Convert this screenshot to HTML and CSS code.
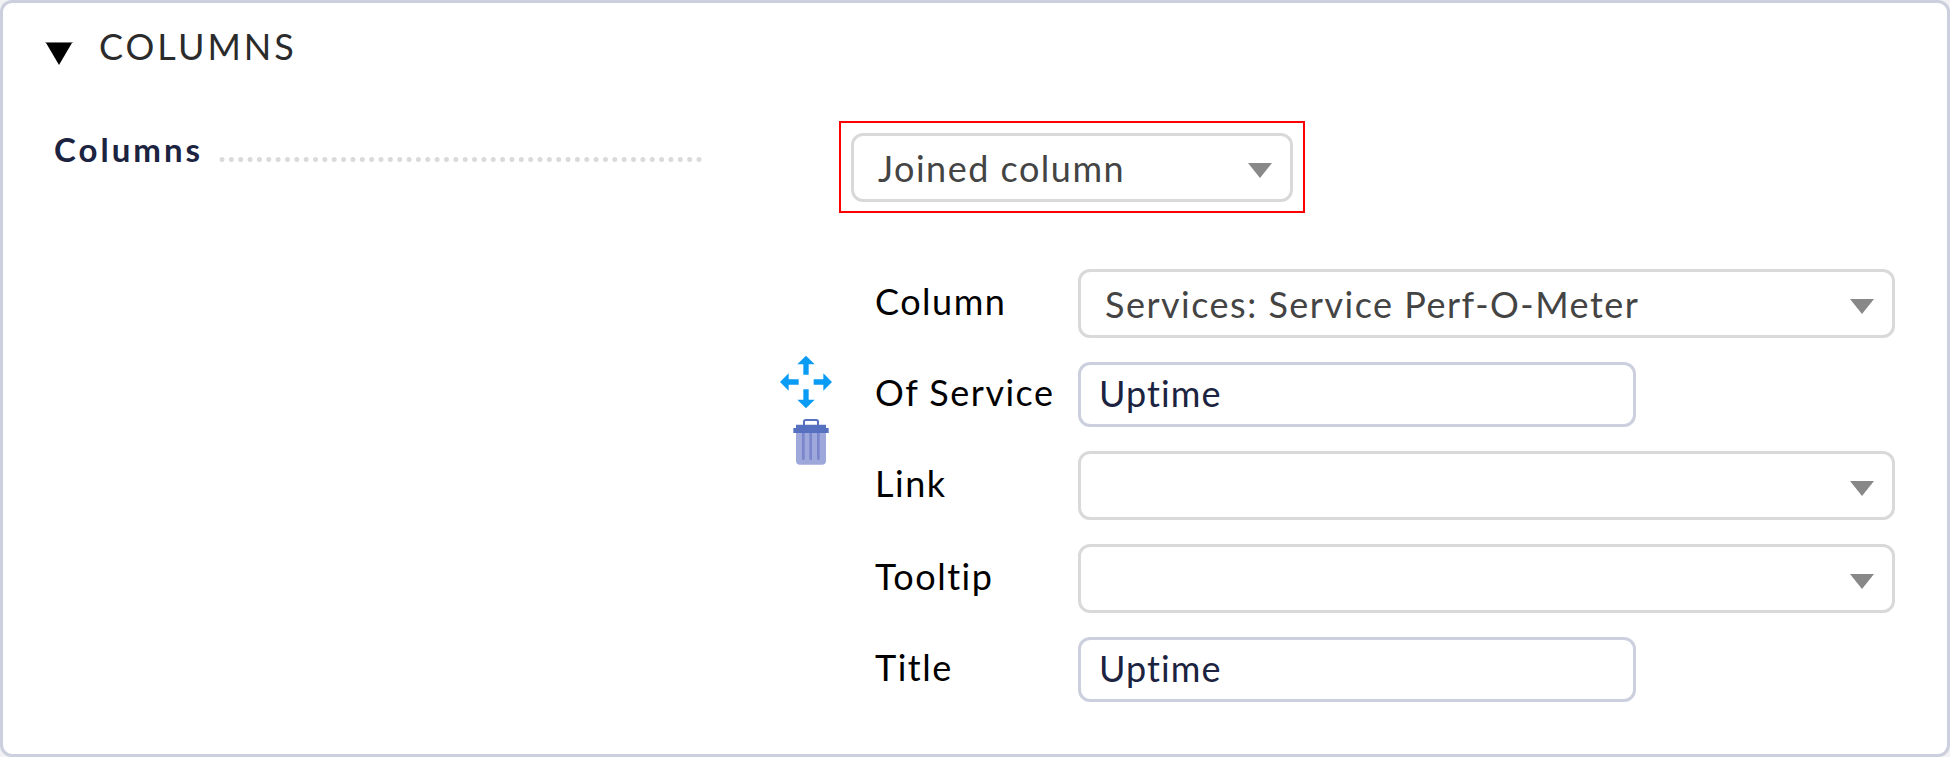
FILE: index.html
```html
<!DOCTYPE html>
<html lang="en">
<head>
<meta charset="utf-8">
<title>Columns</title>
<link rel="stylesheet" href="styles.css">
</head>
<body>
<section class="panel">
  <header class="panel-header">
    <svg class="toggle" width="28" height="23" viewBox="0 0 28 23"><path d="M.5 0H27.500L14 23Z" fill="#000"/><path d="M.5 .5H27.500" stroke="#777"/></svg>
    <h1 class="panel-title">COLUMNS</h1>
  </header>
  <div class="panel-body">
    <div class="legend">
      <span class="legend-text">Columns</span>
      <svg class="leader" width="483" height="7" viewBox="0 0 483 7"><path d="M3 3.500H481" stroke="#dadada" stroke-width="5" stroke-linecap="round" stroke-dasharray="0 9.353"/></svg>
    </div>
    <div class="content">
      <div class="highlight">
        <div class="select"><span>Joined column</span><svg class="caret" width="24" height="15" viewBox="0 0 24 15"><path d="M0 0H24L12 15Z"/></svg></div>
      </div>
      <div class="entry">
        <div class="actions">
          <svg class="move" width="52" height="54" viewBox="0 -2 156 162" fill="#0a9bf5">
            <path d="M78 0L104 26H86V57H70V26H52Z"/>
            <path d="M78 158L104 132H86V101H70V132H52Z"/>
            <path d="M0 79L26 53V71H56V87H26V105Z"/>
            <path d="M156 79L130 53V71H101V87H130V105Z"/>
          </svg>
          <svg class="trash" width="36" height="46" viewBox="0 0 108 138">
            <path d="M9 38H99V125Q99 137 87 137H21Q9 137 9 125Z" fill="#9fa8da"/>
            <path d="M31 42V122M53 42V122M76 42V122" stroke="#7986cb" stroke-width="8"/>
            <path d="M33 18V8Q33 3 38 3H70Q75 3 75 8V18" fill="none" stroke="#5770c0" stroke-width="6"/>
            <path d="M9 17H99V27H107V42H1V27H9Z" fill="#5770c0"/>
          </svg>
        </div>
        <div class="fields">
          <label class="label">Column</label>
          <div class="select"><span>Services: Service Perf-O-Meter</span><svg class="caret" width="24" height="15" viewBox="0 0 24 15"><path d="M0 0H24L12 15Z"/></svg></div>
          <label class="label">Of Service</label>
          <div class="input">Uptime</div>
          <label class="label">Link</label>
          <div class="select"><span></span><svg class="caret" width="24" height="15" viewBox="0 0 24 15"><path d="M0 0H24L12 15Z"/></svg></div>
          <label class="label">Tooltip</label>
          <div class="select"><span></span><svg class="caret" width="24" height="15" viewBox="0 0 24 15"><path d="M0 0H24L12 15Z"/></svg></div>
          <label class="label">Title</label>
          <div class="input">Uptime</div>
        </div>
      </div>
    </div>
  </div>
</section>
</body>
</html>
```
FILE: styles.css
```css
* { box-sizing: border-box; }
body {
  margin: 0;
  background: #f2f2f4;
  font-family: Lato, sans-serif;
  font-size: 36px;
  letter-spacing: 1.5px;
  color: #000;
}
svg { display: block; flex: none; }
.panel {
  height: 757px;
  border: 3px solid #cccfde;
  border-radius: 12px;
  background: #fff;
}
.panel-header {
  display: flex;
  height: 118px;
  padding: 22px 0 0 42px;
}
.toggle { margin-top: 17px; }
.panel-title {
  margin: 0 0 0 26px;
  font-size: 36px;
  line-height: 43px;
  font-weight: 400;
  letter-spacing: 3px;
  color: #2b2b2b;
}
.panel-body { display: flex; }
.legend {
  display: flex;
  width: 777px;
  padding: 8px 0 0 51px;
}
.legend-text {
  width: 165px;
  font-size: 33px;
  line-height: 40px;
  font-weight: 700;
  letter-spacing: 3px;
  color: #1b2340;
}
.leader { margin-top: 27px; }
.highlight {
  width: 466px;
  height: 92px;
  margin-left: 59px;
  padding: 10px;
  border: 2px solid #f00;
}
.select, .input {
  display: flex;
  align-items: center;
  border: 3px solid #d9d9d9;
  border-radius: 12px;
  white-space: nowrap;
}
.select {
  height: 69px;
  justify-content: space-between;
  padding: 1px 18px 0 24px;
  color: #444;
}
.highlight .select { width: 442px; }
.caret { margin-top: 4px; fill: #888; }
.input {
  width: 558px;
  height: 65px;
  padding: 0 0 4px 18px;
  border-color: #cccfde;
  letter-spacing: 1.1px;
  color: #1b2340;
}
.entry { display: flex; margin-top: 56px; }
.actions { width: 95px; padding-top: 86px; }
.trash { margin: 10px 0 0 13px; }
.fields {
  display: grid;
  grid-template-columns: 203px 817px;
  row-gap: 24px;
}
.label {
  align-self: center;
  padding-bottom: 5px;
  white-space: nowrap;
}
```
